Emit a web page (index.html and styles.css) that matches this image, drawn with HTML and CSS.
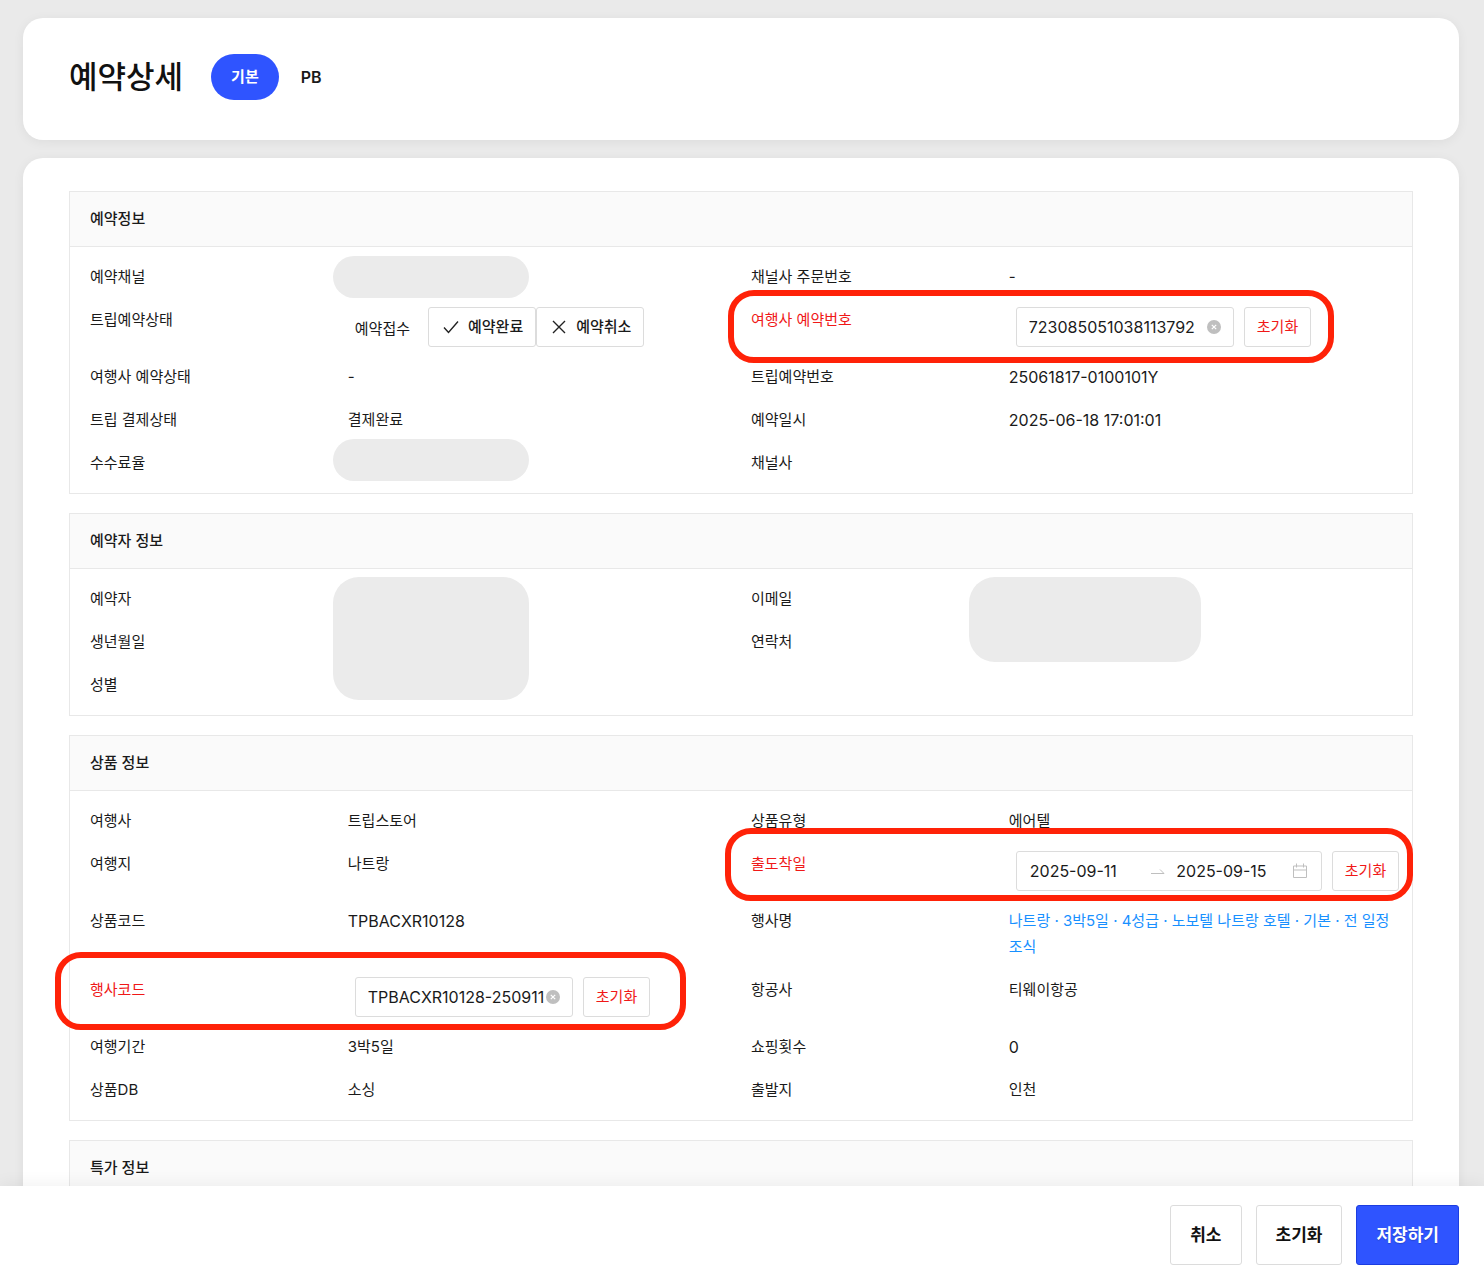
FILE: index.html
```html
<!DOCTYPE html>
<html lang="ko">
<head>
	<meta charset="UTF-8">
	<title>예약상세</title>
	<link rel="stylesheet" href="styles.css">
</head>
<body>
	<main>
		<header class="card top">
			<h1>예약상세</h1>
			<nav class="tabs">
				<button type="button" class="selected">기본</button>
				<button type="button" class="num">PB</button>
			</nav>
		</header>

		<div class="card detail">
			<section class="panel">
				<h2>예약정보</h2>
				<dl>
					<div class="item"><dt>예약채널</dt><dd><span class="mask"></span></dd></div>
					<div class="item"><dt>채널사 주문번호</dt><dd>-</dd></div>
					<div class="item">
						<dt>트립예약상태</dt>
						<dd class="control">
							<span class="state">예약접수</span>
							<div class="group">
								<button type="button" class="btn"><svg class="icon" viewBox="0 0 16 16"><path d="M1 8.5 5.5 13.5 15 2.5"/></svg>예약완료</button>
								<button type="button" class="btn"><svg class="icon" viewBox="0 0 16 16"><path d="M2 2 14 14M14 2 2 14"/></svg>예약취소</button>
							</div>
						</dd>
					</div>
					<div class="item required mark mark-number">
						<dt><label for="agency-no">여행사 예약번호</label></dt>
						<dd class="control">
							<div class="field">
								<input type="text" id="agency-no" value="723085051038113792">
								<button type="button" class="clear" aria-label="지우기"><svg viewBox="0 0 14 14"><circle cx="7" cy="7" r="7"/><path d="M4.8 4.8 9.2 9.2M9.2 4.8 4.8 9.2"/></svg></button>
							</div>
							<button type="button" class="btn danger">초기화</button>
						</dd>
					</div>
					<div class="item"><dt>여행사 예약상태</dt><dd>-</dd></div>
					<div class="item"><dt>트립예약번호</dt><dd class="num">25061817-0100101Y</dd></div>
					<div class="item"><dt>트립 결제상태</dt><dd>결제완료</dd></div>
					<div class="item"><dt>예약일시</dt><dd class="num">2025-06-18 17:01:01</dd></div>
					<div class="item"><dt>수수료율</dt><dd><span class="mask mask-rate"></span></dd></div>
					<div class="item"><dt>채널사</dt><dd></dd></div>
				</dl>
			</section>

			<section class="panel">
				<h2>예약자 정보</h2>
				<dl>
					<div class="item"><dt>예약자</dt><dd><span class="mask mask-person"></span></dd></div>
					<div class="item"><dt>이메일</dt><dd><span class="mask mask-contact"></span></dd></div>
					<div class="item"><dt>생년월일</dt><dd></dd></div>
					<div class="item"><dt>연락처</dt><dd></dd></div>
					<div class="item"><dt>성별</dt><dd></dd></div>
				</dl>
			</section>

			<section class="panel">
				<h2>상품 정보</h2>
				<dl>
					<div class="item"><dt>여행사</dt><dd>트립스토어</dd></div>
					<div class="item"><dt>상품유형</dt><dd>에어텔</dd></div>
					<div class="item"><dt>여행지</dt><dd>나트랑</dd></div>
					<div class="item required mark mark-date">
						<dt><label for="start-date">출도착일</label></dt>
						<dd class="control">
							<div class="field range">
								<input type="text" id="start-date" value="2025-09-11">
								<svg class="arrow" viewBox="0 0 14 14"><path d="M0 9.5H13L9 5.5"/></svg>
								<input type="text" aria-label="도착일" value="2025-09-15">
								<svg class="calendar" viewBox="0 0 16 16"><path d="M1.5 3H14.5V14.5H1.5ZM1.5 7H14.5M4.5 .5V4.5M11.5 .5V4.5"/></svg>
							</div>
							<button type="button" class="btn danger">초기화</button>
						</dd>
					</div>
					<div class="item"><dt>상품코드</dt><dd class="num">TPBACXR10128</dd></div>
					<div class="item"><dt>행사명</dt><dd class="name"><a href="#">나트랑 · 3박5일 · 4성급 · 노보텔 나트랑 호텔 · 기본 · 전 일정 조식</a></dd></div>
					<div class="item required mark mark-code">
						<dt><label for="event-code">행사코드</label></dt>
						<dd class="control">
							<div class="field">
								<input type="text" id="event-code" value="TPBACXR10128-250911">
								<button type="button" class="clear" aria-label="지우기"><svg viewBox="0 0 14 14"><circle cx="7" cy="7" r="7"/><path d="M4.8 4.8 9.2 9.2M9.2 4.8 4.8 9.2"/></svg></button>
							</div>
							<button type="button" class="btn danger">초기화</button>
						</dd>
					</div>
					<div class="item"><dt>항공사</dt><dd>티웨이항공</dd></div>
					<div class="item"><dt>여행기간</dt><dd>3박5일</dd></div>
					<div class="item"><dt>쇼핑횟수</dt><dd class="num">0</dd></div>
					<div class="item"><dt>상품DB</dt><dd>소싱</dd></div>
					<div class="item"><dt>출발지</dt><dd>인천</dd></div>
				</dl>
			</section>

			<section class="panel">
				<h2>특가 정보</h2>
			</section>
		</div>
	</main>

	<footer>
		<button type="button">취소</button>
		<button type="button">초기화</button>
		<button type="button" class="primary">저장하기</button>
	</footer>
</body>
</html>
```
FILE: styles.css
```css
*, *::after{
	margin: 0;
	padding: 0;
	box-sizing: border-box;
}
body{
	display: flex;
	flex-direction: column;
	height: 100vh;
	background: #eaeaea;
	color: #1a1a1a;
	font: 15px/26px Inter, "Noto Sans CJK KR", sans-serif;
}
button, input{
	font: inherit;
	color: inherit;
}
button{
	cursor: pointer;
}
main{
	flex: 1;
	min-height: 0;
	overflow-y: auto;
	scrollbar-width: none;
	padding: 18px 25px 18px 23px;
}
.card{
	background: #fff;
	border-radius: 20px;
	box-shadow: 0 2px 12px rgba(0,0,0,.06);
}
.top{
	display: flex;
	align-items: center;
	gap: 28px;
	min-height: 122px;
	padding: 0 46px 4px;
	margin-bottom: 18px;
}
h1{
	font-size: 31px;
	line-height: 40px;
	font-weight: 500;
	color: #111;
}
.tabs{
	display: flex;
	gap: 2px;
}
.tabs button{
	height: 46px;
	padding: 0 20px;
	border: 0;
	border-radius: 23px;
	background: none;
	font-weight: 600;
}
.tabs .selected{
	background: #2f54ff;
	color: #fff;
	font-weight: 700;
}
.num, .field input{
	font-size: 16px;
}
.detail{
	padding: 33px 46px;
}

/* 정보 패널 */
.panel{
	border: 1px solid #e8e8e8;
	margin-bottom: 19px;
}
h2{
	padding: 14px 20px;
	background: #fafafa;
	border-bottom: 1px solid #e8e8e8;
	font-size: 15px;
	font-weight: 500;
}
dl{
	display: grid;
	grid-template-columns: 1fr 1fr;
	padding: 17px 0 0 20px;
}
.item{
	display: flex;
	position: relative;
	padding-bottom: 17px;
}
dt{
	flex: 0 0 39%;
}
dd{
	flex: 1;
	position: relative;
	min-height: 26px;
}
.required dt{
	color: #f01818;
}
.name{
	padding-right: 16px;
	word-break: keep-all;
}
a{
	color: #1890ff;
	text-decoration: none;
}
.control{
	display: flex;
	gap: 10px;
	padding-left: 7px;
}
.state{
	padding: 9px 8px 0 0;
	height: 40px;
}
.group{
	display: flex;
}
.btn{
	display: flex;
	align-items: center;
	height: 40px;
	padding: 0 12px;
	border: 1px solid #dcdcdc;
	border-radius: 3px;
	background: #fff;
	white-space: nowrap;
}
.group .btn{
	font-weight: 500;
}
.danger{
	color: #f01818;
}
.icon{
	width: 16px;
	height: 16px;
	margin: 0 9px 0 2px;
	fill: none;
	stroke: #222;
	stroke-width: 1.4;
}
.field{
	display: flex;
	align-items: center;
	width: 218px;
	height: 40px;
	padding: 0 12px;
	border: 1px solid #dcdcdc;
	border-radius: 3px;
	background: #fff;
}
.field input{
	flex: 1;
	min-width: 0;
	border: 0;
	outline: 0;
	background: none;
}
.clear{
	width: 14px;
	height: 14px;
	border: 0;
	background: none;
}
.clear svg{
	display: block;
	fill: #bfbfbf;
	stroke: #fff;
	stroke-width: 1.2;
}
.clear circle{
	stroke: none;
}
.range{
	width: 306px;
	padding: 0 13px;
}
.arrow, .calendar{
	fill: none;
	stroke: #bfbfbf;
}
.arrow{
	width: 14px;
	height: 14px;
	margin: 0 11px 0 6px;
}
.calendar{
	width: 16px;
	height: 16px;
}

/* 가림 영역 */
.mask{
	position: absolute;
	left: -15px;
	top: -8px;
	width: 196px;
	height: 42px;
	border-radius: 26px;
	background: #ebebeb;
}
.mask-rate{
	top: -11px;
}
.mask-person{
	top: -9px;
	height: 123px;
	z-index: 1;
}
.mask-contact{
	left: -40px;
	top: -9px;
	width: 232px;
	height: 85px;
	z-index: 1;
}

/* 강조 테두리 */
.mark::after{
	content: "";
	position: absolute;
	z-index: 2;
	border: 6px solid #ff2208;
	border-radius: 26px;
	pointer-events: none;
}
.mark-number::after{
	left: -23px;
	top: -17px;
	width: 606px;
	height: 73px;
}
.mark-date::after{
	left: -26px;
	top: -23px;
	width: 688px;
	height: 73px;
}
.mark-code::after{
	left: -35px;
	top: -25px;
	width: 631px;
	height: 78px;
}

footer{
	display: flex;
	justify-content: flex-end;
	gap: 14px;
	padding: 19px 25px 17px;
	background: #fff;
	box-shadow: 0 -2px 16px rgba(0,0,0,.06);
	position: relative;
	z-index: 3;
}
footer button{
	height: 60px;
	padding: 0 19px;
	border: 1px solid #dcdcdc;
	border-radius: 3px;
	background: #fff;
	color: #111;
	font-size: 17px;
	font-weight: 700;
}
footer .primary{
	background: #2f54ff;
	border-color: #1c3de0;
	color: #fff;
	text-shadow: 0 1px 1px rgba(0,0,0,.2);
}
```
